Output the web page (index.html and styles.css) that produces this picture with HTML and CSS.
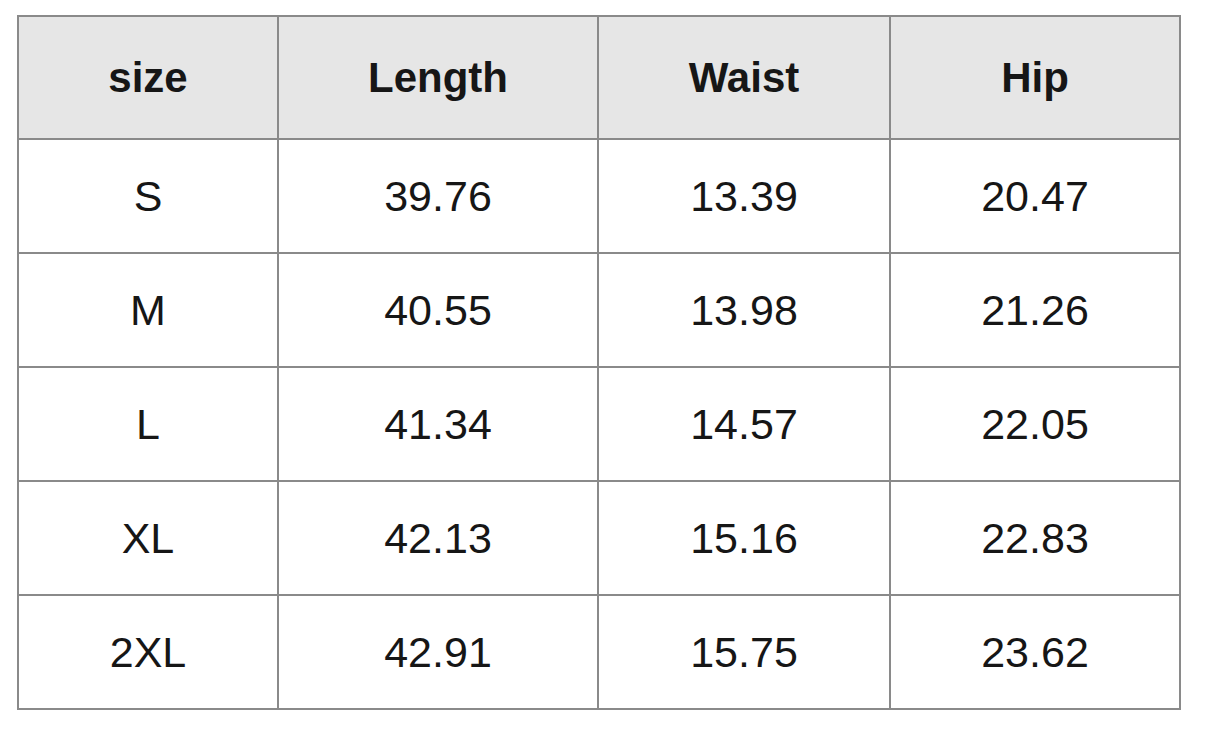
FILE: index.html
```html
<!DOCTYPE html>
<html>
<head>
<meta charset="utf-8">
<link rel="stylesheet" href="styles.css">
</head>
<body>
<table class="size-table">
  <colgroup>
    <col class="c1"><col class="c2"><col class="c3"><col class="c4">
  </colgroup>
  <thead>
    <tr><th>size</th><th>Length</th><th>Waist</th><th>Hip</th></tr>
  </thead>
  <tbody>
    <tr><td>S</td><td>39.76</td><td>13.39</td><td>20.47</td></tr>
    <tr><td>M</td><td>40.55</td><td>13.98</td><td>21.26</td></tr>
    <tr><td>L</td><td>41.34</td><td>14.57</td><td>22.05</td></tr>
    <tr><td>XL</td><td>42.13</td><td>15.16</td><td>22.83</td></tr>
    <tr><td>2XL</td><td>42.91</td><td>15.75</td><td>23.62</td></tr>
  </tbody>
</table>
</body>
</html>
```
FILE: styles.css
```css
html, body {
  margin: 0;
  background: #ffffff;
}
body {
  padding: 15px 0 0 17px;
  font-family: "Liberation Sans", Arial, sans-serif;
  color: #161616;
}
.size-table {
  border-collapse: collapse;
  table-layout: fixed;
  width: 1162px;
}
.c1 { width: 260px; }
.c2 { width: 320px; }
.c3 { width: 292px; }
.c4 { width: 290px; }
.size-table th,
.size-table td {
  border: 2px solid #8a8a8a;
  text-align: center;
  vertical-align: middle;
  padding: 0;
  font-size: 42px;
}
.size-table th {
  background: #e6e6e6;
  font-weight: bold;
  height: 121px;
}
.size-table td {
  font-weight: normal;
  height: 112px;
  font-size: 43px;
}
```
